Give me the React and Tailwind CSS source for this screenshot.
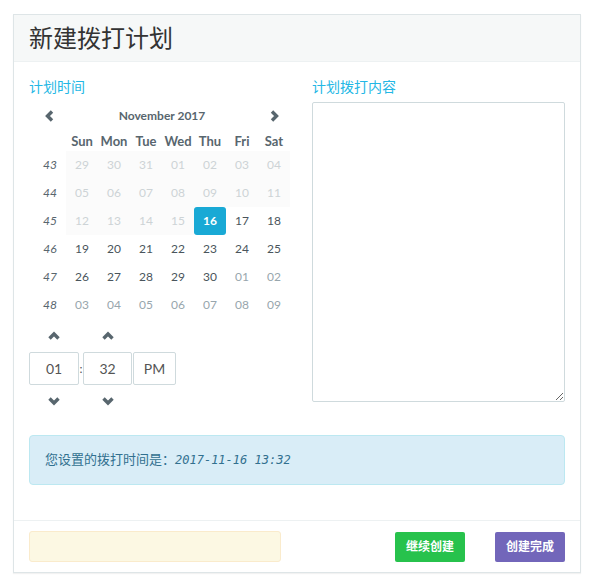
import React from 'react';

const FONT = { fontFamily: 'Lato, "Noto Sans CJK SC", sans-serif' };

const DAYS = ['Sun', 'Mon', 'Tue', 'Wed', 'Thu', 'Fri', 'Sat'];

// kind: o/d = disabled past, a = active, c = current month, n = next month
const WEEKS = [
  { no: 43, days: [['29', 'o'], ['30', 'o'], ['31', 'o'], ['01', 'd'], ['02', 'd'], ['03', 'd'], ['04', 'd']] },
  { no: 44, days: [['05', 'd'], ['06', 'd'], ['07', 'd'], ['08', 'd'], ['09', 'd'], ['10', 'd'], ['11', 'd']] },
  { no: 45, days: [['12', 'd'], ['13', 'd'], ['14', 'd'], ['15', 'd'], ['16', 'a'], ['17', 'c'], ['18', 'c']] },
  { no: 46, days: [['19', 'c'], ['20', 'c'], ['21', 'c'], ['22', 'c'], ['23', 'c'], ['24', 'c'], ['25', 'c']] },
  { no: 47, days: [['26', 'c'], ['27', 'c'], ['28', 'c'], ['29', 'c'], ['30', 'c'], ['01', 'n'], ['02', 'n']] },
  { no: 48, days: [['03', 'n'], ['04', 'n'], ['05', 'n'], ['06', 'n'], ['07', 'n'], ['08', 'n'], ['09', 'n']] },
];

function Chevron({ dir }) {
  const d = {
    left: 'M9 2.5 L4.5 7 L9 11.5',
    right: 'M5 2.5 L9.5 7 L5 11.5',
    up: 'M2.5 9.5 L7 5 L11.5 9.5',
    down: 'M2.5 4.5 L7 9 L11.5 4.5',
  }[dir];
  return (
    <svg width="14" height="14" viewBox="0 0 14 14">
      <path d={d} fill="none" stroke="#58666e" strokeWidth="3.4" strokeLinejoin="miter" />
    </svg>
  );
}

function DayCell({ label, kind }) {
  if (kind === 'a') {
    return (
      <div className="w-8 h-7 flex items-center justify-center rounded-[3px] bg-[#19a9d5] text-white font-bold">
        {label}
      </div>
    );
  }
  const cls = {
    o: 'text-[#cdd3d6] bg-[#fbfbfb]',
    d: 'text-[#cdd3d6] bg-[#fbfbfb]',
    c: 'text-[#4a555c]',
    n: 'text-[#98a6ad]',
  }[kind];
  return <div className={`w-8 h-7 flex items-center justify-center ${cls}`}>{label}</div>;
}

function Calendar() {
  return (
    <div className="ml-[5px] w-64 text-[12px]">
      <div className="h-7 flex items-center">
        <div className="w-8 flex justify-center"><Chevron dir="left" /></div>
        <div className="flex-1 text-center font-bold text-[#58666e]">November 2017</div>
        <div className="w-8 flex justify-center"><Chevron dir="right" /></div>
      </div>
      <div className="h-[21px] pt-[2px] flex items-center font-bold text-[#58666e] text-[13px]">
        <div className="w-8" />
        {DAYS.map(d => (
          <div key={d} className="w-8 text-center">{d}</div>
        ))}
      </div>
      {WEEKS.map(w => (
        <div key={w.no} className="flex">
          <div className="w-8 h-7 flex items-center justify-center italic text-[#58666e]">{w.no}</div>
          {w.days.map(([l, k], i) => (
            <DayCell key={i} label={l} kind={k} />
          ))}
        </div>
      ))}
    </div>
  );
}

function TimePicker() {
  return (
    <div className="mt-px text-[14px] text-[#555]">
      <div className="flex h-[32px] items-center">
        <div className="w-[50px] flex justify-center"><Chevron dir="up" /></div>
        <div className="w-[4px]" />
        <div className="w-[49px] flex justify-center"><Chevron dir="up" /></div>
      </div>
      <div className="flex items-center h-[33px]">
        <div className="w-[50px] h-[33px] border border-[#cfdadd] rounded-[2px] flex items-center justify-center">01</div>
        <div className="w-[4px] text-center text-[12px]">:</div>
        <div className="w-[49px] h-[33px] border border-[#cfdadd] rounded-[2px] flex items-center justify-center">32</div>
        <div className="ml-px w-[43px] h-[33px] border border-[#cfdadd] rounded-[2px] flex items-center justify-center">PM</div>
      </div>
      <div className="flex h-[32px] items-center">
        <div className="w-[50px] flex justify-center"><Chevron dir="down" /></div>
        <div className="w-[4px]" />
        <div className="w-[49px] flex justify-center"><Chevron dir="down" /></div>
      </div>
    </div>
  );
}

export default function App() {
  return (
    <div className="w-[595px] h-[587px] bg-white pt-[14px] pl-[13px]" style={FONT}>
      <div className="w-[568px] border border-[#dee5e7] bg-white shadow-[0_1px_1px_rgba(0,0,0,0.05)]">
        {/* Header */}
        <div className="h-[47px] bg-[#f6f8f8] border-b border-[#edf1f2] px-[15px] flex items-center">
          <div className="text-[24px] text-[#333] leading-none">新建拨打计划</div>
        </div>

        {/* Body */}
        <div className="px-[15px] pt-[15px] pb-[35px]">
          <div className="flex gap-[30px]">
            <div className="w-[253px]">
              <div className="h-5 text-[14px] text-[#23b7e5] leading-5 mb-[5px]">计划时间</div>
              <Calendar />
              <TimePicker />
            </div>
            <div className="w-[253px]">
              <div className="h-5 text-[14px] text-[#23b7e5] leading-5 mb-[5px]">计划拨打内容</div>
              <textarea className="block w-[253px] h-[300px] border border-[#cfdadd] rounded-[2px] outline-none resize-y" />
            </div>
          </div>

          <div className="mt-[18px] h-[50px] rounded-[4px] border border-[#bce8f1] bg-[#d9edf7] px-[15px] flex items-center text-[13px] text-[#31708f]">
            <span>您设置的拨打时间是：</span>
            <span className="italic text-[12px]" style={{ fontFamily: '"DejaVu Sans Mono", monospace' }}>2017-11-16 13:32</span>
          </div>
        </div>

        {/* Footer */}
        <div className="border-t border-[#edf1f2] px-[15px] pt-[10px] pb-[10px] flex items-center">
          <div className="w-[252px] h-[31px] rounded-[3px] border border-[#faebcc] bg-[#fcf8e3]" />
          <div className="flex-1" />
          <button className="w-[70px] h-[30px] rounded-[2px] bg-[#27c24c] text-white text-[12px] font-bold">继续创建</button>
          <button className="ml-[30px] w-[70px] h-[30px] rounded-[2px] bg-[#7266ba] text-white text-[12px] font-bold">创建完成</button>
        </div>
      </div>
    </div>
  );
}
